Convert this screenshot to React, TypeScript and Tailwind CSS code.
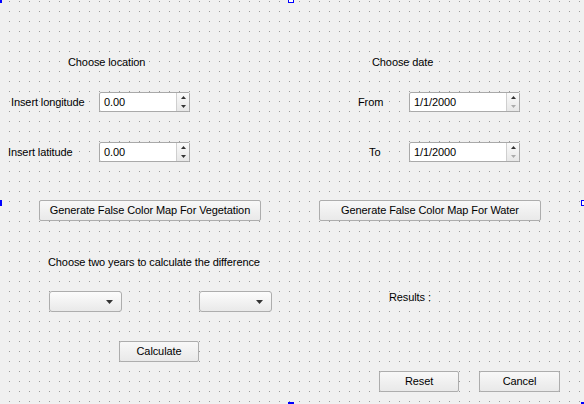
import React from 'react';

// small triangle used by spin boxes and combo boxes
const Arrow = ({ up, dim, w = 5, h = 3 }: { up?: boolean; dim?: boolean; w?: number; h?: number }) => (
  <svg width={w} height={h} viewBox={`0 0 ${w} ${h}`}>
    <path d={up ? `M0 ${h}L${w / 2} 0L${w} ${h}Z` : `M0 0L${w} 0L${w / 2} ${h}Z`} fill={dim ? '#ababab' : '#333333'} />
  </svg>
);

const SpinBox: React.FC<{ value: string; width: string; dimDown?: boolean }> = ({ value, width, dimDown }) => (
  <div className={`flex h-[20px] rounded-[2px] border border-[#a9a9a9] bg-white ${width}`}>
    <div className="flex flex-1 items-center pl-[4px]">{value}</div>
    <div className="flex w-[13px] flex-col border-l border-[#cfcfcf] bg-linear-to-b from-[#fbfbfb] to-[#e7e7e7]">
      <div className="flex flex-1 items-center justify-center">
        <Arrow up />
      </div>
      <div className="flex flex-1 items-center justify-center">
        <Arrow dim={dimDown} />
      </div>
    </div>
  </div>
);

const ComboBox = () => (
  <div className="flex h-[21px] w-[73px] items-center justify-end rounded-[3px] border border-[#adadad] bg-linear-to-b from-[#fcfcfc] to-[#e9e9e9] pr-[8px]">
    <Arrow w={7} h={4} />
  </div>
);

const Button: React.FC<{ label: string; width: string; height?: string }> = ({ label, width, height = 'h-[21px]' }) => (
  <div
    className={`flex items-center justify-center rounded-[2px] border border-[#adadad] bg-linear-to-b from-[#f8f8f8] to-[#e9e9e9] ${width} ${height}`}
  >
    {label}
  </div>
);

export default function App() {
  return (
    <div className="relative flex h-[404px] w-[584px] flex-col overflow-hidden bg-[#9a9a9a] font-['Liberation_Sans',Arial,sans-serif] text-[11px] tracking-[-0.1px] text-black [background-image:linear-gradient(to_right,transparent_1px,#f0f0f0_1px),linear-gradient(to_bottom,transparent_1px,#f0f0f0_1px)] [background-position:9px_1px] [background-size:10px_10px]">
      {/* headings */}
      <div className="mt-[55px] flex h-[14px] items-center">
        <div className="w-[372px] pl-[68px]">Choose location</div>
        <div>Choose date</div>
      </div>

      {/* longitude / from */}
      <div className="mt-[23px] flex h-[20px] items-center">
        <div className="flex w-[358px] items-center pl-[11px]">
          <span className="w-[88px]">Insert longitude</span>
          <SpinBox value="0.00" width="w-[91px]" />
        </div>
        <span className="w-[51px]">From</span>
        <SpinBox value="1/1/2000" width="w-[111px]" dimDown />
      </div>

      {/* latitude / to */}
      <div className="mt-[30px] flex h-[20px] items-center">
        <div className="flex w-[369px] items-center pl-[8px]">
          <span className="w-[91px]">Insert latitude</span>
          <SpinBox value="0.00" width="w-[91px]" />
        </div>
        <span className="w-[40px]">To</span>
        <SpinBox value="1/1/2000" width="w-[111px]" dimDown />
      </div>

      {/* false color maps */}
      <div className="mt-[38px] flex pl-[39px]">
        <Button label="Generate False Color Map For Vegetation" width="w-[222px]" />
        <div className="ml-[58px]">
          <Button label="Generate False Color Map For Water" width="w-[222px]" />
        </div>
      </div>

      <div className="mt-[34px] flex h-[14px] items-center pl-[48px]">Choose two years to calculate the difference</div>

      {/* year pickers + results */}
      <div className="mt-[22px] flex pl-[49px]">
        <ComboBox />
        <div className="ml-[77px]">
          <ComboBox />
        </div>
        <span className="ml-[117px] self-start leading-[12px]">Results :</span>
      </div>

      <div className="mt-[29px] flex pl-[119px]">
        <Button label="Calculate" width="w-[80px]" />
      </div>

      <div className="mt-[9px] flex gap-[20px] pl-[379px]">
        <Button label="Reset" width="w-[80px]" />
        <Button label="Cancel" width="w-[81px]" />
      </div>

      {/* designer selection handles */}
      <div className="absolute left-[-4px] top-[-3px] h-[6px] w-[6px] bg-[#0000ff]" />
      <div className="absolute left-[288px] top-[-3px] h-[6px] w-[6px] border border-[#0000ff] bg-white" />
      <div className="absolute left-[-4px] top-[200px] h-[6px] w-[6px] bg-[#0000ff]" />
      <div className="absolute left-[581px] top-[200px] h-[6px] w-[6px] border border-[#0000ff] bg-white" />
      <div className="absolute left-[288px] top-[402px] h-[6px] w-[6px] bg-[#0000ff]" />
      <div className="absolute left-[581px] top-[402px] h-[6px] w-[6px] bg-[#0000ff]" />
    </div>
  );
}
